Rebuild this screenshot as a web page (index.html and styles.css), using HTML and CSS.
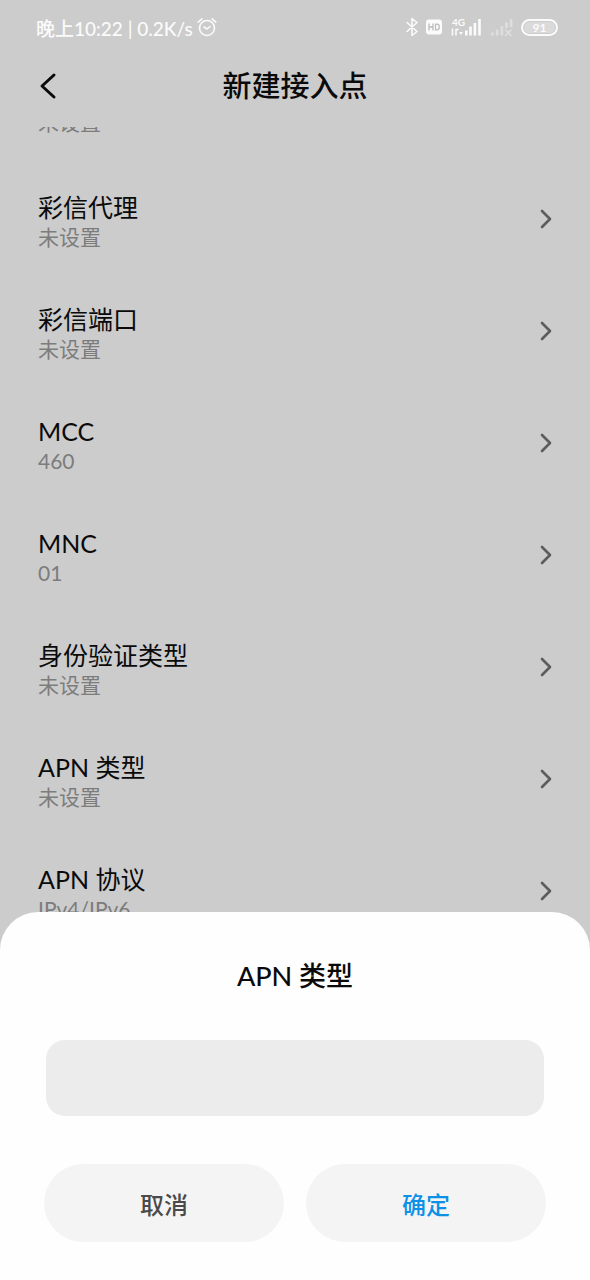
FILE: index.html
```html
<!DOCTYPE html>
<html lang="zh-CN">
<head>
	<meta charset="UTF-8">
	<meta name="viewport" content="width=device-width, initial-scale=1.0">
	<title>新建接入点</title>
	<link rel="stylesheet" href="styles.css">
</head>
<body>

	<!-- SETTINGS SCREEN -->
	<div class="screen">
		<div class="status-bar">
			<div class="status-left">
				<span>晚上10:22 | 0.2K/s</span>
				<svg class="icon-alarm" viewBox="0 0 20 20" width="20" height="20">
					<circle cx="10" cy="11" r="7.5"/>
					<path d="M1.2 5.2 L5 1.8 M18.8 5.2 L15 1.8 M7 10 L10 12 L13 9.5"/>
				</svg>
			</div>
			<div class="status-right">
				<svg class="icon-bluetooth" viewBox="0 0 12 20" width="12" height="20">
					<path d="M1 5.5 L11 14.5 L6 18.5 V1.5 L11 5.5 L1 14.5"/>
				</svg>
				<svg class="icon-hd" viewBox="0 0 16 16" width="16" height="16">
					<rect class="fill" x="0" y="0.5" width="16" height="15" rx="3"/>
					<path d="M3 5 V11 M3 8 H7 M7 5 V11 M9.5 5.2 V10.8 H11 Q13.3 10.8 13.3 8 Q13.3 5.2 11 5.2 Z"/>
				</svg>
				<div class="signal">
					<span class="signal-type">4G</span>
					<svg viewBox="0 0 32 20" width="32" height="20">
						<path class="data" d="M2.5 12 V18 M6 18 V12.5 H8"/>
						<path class="fill" d="M9 15 H13 L11 18 Z M15 13.5 h2.6 V18.5 h-2.6 Z M19.2 9.5 h2.6 V18.5 h-2.6 Z M23.6 6 h2.6 V18.5 h-2.6 Z M28.2 2 h2.6 V18.5 h-2.6 Z"/>
					</svg>
				</div>
				<svg class="icon-nosignal" viewBox="0 0 23 20" width="23" height="20">
					<path class="fill" d="M1 15.5 h2.6 V18.5 h-2.6 Z M5.8 12.5 h2.6 V18.5 h-2.6 Z M10.6 9 h2.6 V18.5 h-2.6 Z M15.2 5.5 h2.6 V11 h-2.6 Z M19.8 2 h2.6 V10 h-2.6 Z"/>
					<path d="M15.5 13 L21 18.5 M21 13 L15.5 18.5"/>
				</svg>
				<span class="battery"><span class="battery-level">91</span></span>
			</div>
		</div>

		<header class="title-bar">
			<button class="back" aria-label="返回">
				<svg viewBox="0 0 18 28" width="18" height="28"><path d="M15 3 L3 14 L15 25"/></svg>
			</button>
			<h1>新建接入点</h1>
		</header>

		<main class="list">
			<a class="row row-scrolled" href="#">
				<span class="row-text"><span class="row-sub">未设置</span></span>
			</a>
			<a class="row" href="#">
				<span class="row-text"><span class="row-title">彩信代理</span><span class="row-sub">未设置</span></span>
				<svg class="chevron" viewBox="0 0 12 20" width="12" height="20"><path d="M2 2 L10 10 L2 18"/></svg>
			</a>
			<a class="row" href="#">
				<span class="row-text"><span class="row-title">彩信端口</span><span class="row-sub">未设置</span></span>
				<svg class="chevron" viewBox="0 0 12 20" width="12" height="20"><path d="M2 2 L10 10 L2 18"/></svg>
			</a>
			<a class="row" href="#">
				<span class="row-text"><span class="row-title">MCC</span><span class="row-sub">460</span></span>
				<svg class="chevron" viewBox="0 0 12 20" width="12" height="20"><path d="M2 2 L10 10 L2 18"/></svg>
			</a>
			<a class="row" href="#">
				<span class="row-text"><span class="row-title">MNC</span><span class="row-sub">01</span></span>
				<svg class="chevron" viewBox="0 0 12 20" width="12" height="20"><path d="M2 2 L10 10 L2 18"/></svg>
			</a>
			<a class="row" href="#">
				<span class="row-text"><span class="row-title">身份验证类型</span><span class="row-sub">未设置</span></span>
				<svg class="chevron" viewBox="0 0 12 20" width="12" height="20"><path d="M2 2 L10 10 L2 18"/></svg>
			</a>
			<a class="row" href="#">
				<span class="row-text"><span class="row-title">APN 类型</span><span class="row-sub">未设置</span></span>
				<svg class="chevron" viewBox="0 0 12 20" width="12" height="20"><path d="M2 2 L10 10 L2 18"/></svg>
			</a>
			<a class="row" href="#">
				<span class="row-text"><span class="row-title">APN 协议</span><span class="row-sub">IPv4/IPv6</span></span>
				<svg class="chevron" viewBox="0 0 12 20" width="12" height="20"><path d="M2 2 L10 10 L2 18"/></svg>
			</a>
		</main>
	</div>

	<!-- APN TYPE DIALOG -->
	<form class="sheet" role="dialog" aria-labelledby="sheet-title">
		<h2><label id="sheet-title" for="apn-type">APN 类型</label></h2>
		<input class="sheet-input" id="apn-type" type="text">
		<div class="sheet-actions">
			<button class="btn" type="button">取消</button>
			<button class="btn btn-ok" type="submit">确定</button>
		</div>
	</form>

</body>
</html>
```
FILE: styles.css
```css
* {
	margin: 0;
	padding: 0;
	box-sizing: border-box;
}

body {
	height: 100vh;
	overflow: hidden;
	background: #cccccc;
	color: #0a0a0a;
	font-family: Lato, "Noto Sans CJK SC", sans-serif;
}

svg {
	display: block;
	fill: none;
	stroke-linecap: round;
	stroke-linejoin: round;
}

button,
input {
	border: none;
	font-family: inherit;
}

.screen {
	display: flex;
	flex-direction: column;
	height: 100vh;
}

/* Status bar */
.status-bar {
	display: flex;
	justify-content: space-between;
	align-items: center;
	height: 54px;
	padding: 0 32px 0 36px;
	color: #fbfbfb;
	font-size: 19px;
	font-weight: 500;
}

.status-bar svg {
	stroke: #fbfbfb;
	stroke-width: 1.6;
}

.status-bar .fill {
	fill: #fbfbfb;
	stroke: none;
}

.status-left,
.status-right {
	display: flex;
	align-items: center;
	gap: 4px;
}

.status-right {
	gap: 8px;
}

.status-bar .icon-hd {
	stroke: #bbbbbb;
	stroke-width: 1.3;
}

.signal {
	position: relative;
}

.signal-type {
	position: absolute;
	top: 0;
	left: 2px;
	font-size: 10px;
	font-weight: 700;
	line-height: 10px;
}

.icon-nosignal {
	opacity: 0.4;
}

.battery {
	width: 37px;
	height: 17px;
	padding: 1px;
	border: 2px solid #fbfbfb;
	border-radius: 9px;
}

.battery-level {
	display: block;
	border-radius: 6px;
	background: #dadada;
	font-size: 12px;
	font-weight: 700;
	line-height: 11px;
	text-align: center;
}

/* Title bar */
.title-bar {
	display: grid;
	grid-template-columns: 48px 1fr 48px;
	align-items: center;
	height: 73px;
	padding: 0 32px 10px;
}

.title-bar h1 {
	font-size: 29px;
	font-weight: 500;
	line-height: 40px;
	text-align: center;
}

.back {
	padding: 7px;
	background: none;
	cursor: pointer;
}

.back svg {
	stroke: #0a0a0a;
	stroke-width: 3;
}

/* List */
.list {
	flex: 1;
	overflow: hidden;
}

.row {
	display: flex;
	justify-content: space-between;
	align-items: center;
	height: 112px;
	padding: 0 38px;
	color: inherit;
	text-decoration: none;
}

/* Row that is mostly scrolled under the title bar */
.row-scrolled {
	align-items: flex-end;
	height: 36px;
	padding-bottom: 26px;
	overflow: hidden;
}

.row-text {
	display: flex;
	flex-direction: column;
	padding-top: 6px;
	line-height: 30px;
}

.row-title {
	font-size: 25px;
}

.row-sub {
	color: #7c7c7c;
	font-size: 21px;
}

.chevron {
	stroke: #5c5c5c;
	stroke-width: 2.6;
}

/* Bottom sheet */
.sheet {
	position: fixed;
	right: 0;
	bottom: 0;
	left: 0;
	padding: 44px 44px 38px;
	border-radius: 38px 38px 0 0;
	background: #fefefe;
}

.sheet h2 {
	font-size: 27px;
	font-weight: 500;
	line-height: 40px;
	text-align: center;
}

.sheet-input {
	display: block;
	width: calc(100% - 4px);
	height: 76px;
	margin: 44px auto 48px;
	padding: 0 20px;
	border-radius: 19px;
	background: #ececec;
	font-size: 25px;
	outline: none;
}

.sheet-actions {
	display: grid;
	grid-template-columns: 1fr 1fr;
	gap: 22px;
}

.btn {
	height: 78px;
	border-radius: 39px;
	background: #f4f4f4;
	color: #4a4a4a;
	font-size: 24px;
	font-weight: 500;
	cursor: pointer;
}

.btn-ok {
	color: #0d91e6;
}
```
